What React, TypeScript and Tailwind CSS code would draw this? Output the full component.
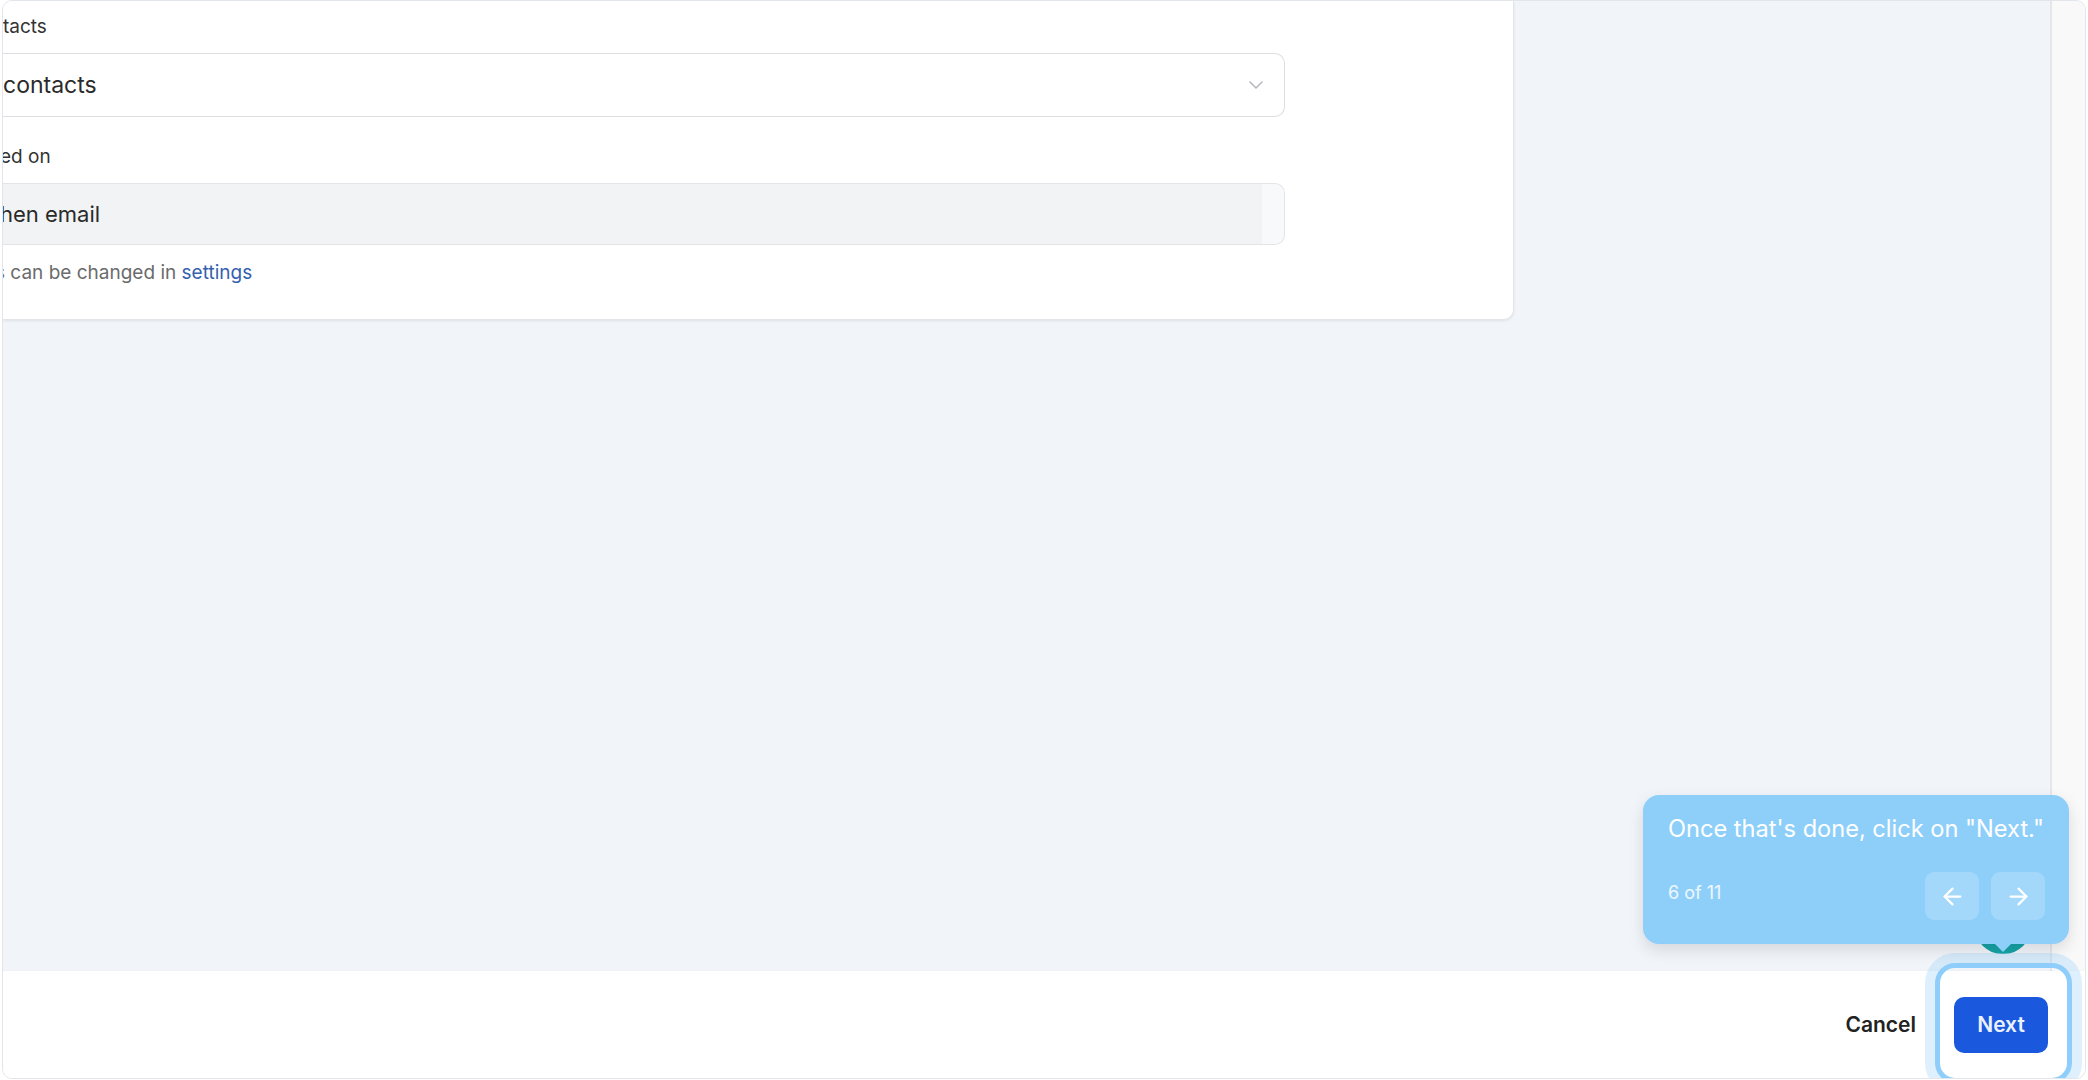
import React from "react";
import { ArrowLeft, ArrowRight, ChevronDown } from "lucide-react";

export default function App() {
  return (
    <div className="w-[2088px] h-[1080px] bg-white pl-[2px] font-['Inter',sans-serif]">
      <div className="relative w-[2084px] h-[1079px] border border-[#e2e5ea] rounded-[10px] overflow-hidden flex flex-col">
        {/* top area */}
        <div className="flex-1 flex min-h-0">
          <div className="flex-1 bg-[#f1f5f9]">
            <div className="w-[1511px] h-[319px] bg-white border-r border-b border-[#e3e5e9] rounded-br-[10px] shadow-[0_1px_3px_rgba(0,0,0,0.08)] pt-[12px]">
              <div className="h-[28px] leading-[28px] text-[19px] text-[#333]">tacts</div>
              <div className="mt-[12px] w-[1282px] h-[64px] bg-white border-y border-r border-[#dcdee2] rounded-r-[10px] flex items-center justify-between pr-[16px]">
                <span className="text-[23px] text-[#2a2a2a]">contacts</span>
                <ChevronDown className="w-[24px] h-[24px] text-[#b5b7bb]" strokeWidth={1.5} />
              </div>
              <div className="mt-[26px] h-[28px] leading-[28px] text-[19px] text-[#333] -ml-[3px]">ed on</div>
              <div className="mt-[12px] w-[1282px] h-[62px] bg-[#f2f3f5] border-y border-r border-[#e2e4e8] rounded-r-[10px] flex items-center overflow-hidden">
                <span className="flex-1 text-[22px] text-[#2a2a2a] -ml-[3px]">hen email</span>
                <div className="w-[22px] h-full bg-[#f8f9fa]" />
              </div>
              <div className="mt-[16px] h-[24px] leading-[24px] text-[19px] text-[#6b6b6b] -ml-[8px]">
                s can be changed in <span className="text-[#3461ad]">settings</span>
              </div>
            </div>
          </div>
          <div className="w-[35px] bg-[#f9f9fa] border-l-2 border-[#e4e6ea]" />
        </div>
        {/* footer */}
        <div className="h-[107px] bg-white flex items-center justify-end pr-[37px] gap-[38px] shadow-[0_-1px_2px_rgba(0,0,0,0.02)]">
          <span className="text-[21px] font-semibold text-[#222]">Cancel</span>
          <button className="relative z-20 w-[94px] h-[56px] rounded-[10px] bg-[#1a58dd] text-[21px] font-semibold text-[#eaf1ff] flex items-center justify-center">
            Next
          </button>
        </div>

        {/* beacon */}
        <div className="absolute left-[1972px] top-[899px] w-[56px] h-[54px] rounded-full bg-[#17a3a6] z-0" />
        {/* highlight ring */}
        <div className="absolute left-[1932px] top-[962px] w-[137px] h-[120px] rounded-[20px] border-[5px] border-[#8fcdfa] shadow-[0_0_0_10px_rgba(160,212,250,0.35)] z-10" />

        {/* tooltip */}
        <div className="absolute left-[1640px] top-[794px] w-[426px] h-[149px] rounded-[16px] bg-[#8ecffa] shadow-[0_6px_16px_rgba(0,0,0,0.12)] pl-[25px] pr-[24px] pt-[18px] z-30">
          <div className="text-[23.6px] leading-[32px] text-white">Once that's done, click on "Next."</div>
          <div className="mt-[27px] flex items-center justify-between">
            <span className="text-[18px] text-white/85 -mt-[8px]">6 of 11</span>
            <div className="flex gap-[12px]">
              <div className="w-[54px] h-[48px] rounded-[9px] bg-white/20 flex items-center justify-center">
                <ArrowLeft className="w-[27px] h-[27px] text-white" strokeWidth={2} />
              </div>
              <div className="w-[54px] h-[48px] rounded-[9px] bg-white/20 flex items-center justify-center">
                <ArrowRight className="w-[27px] h-[27px] text-white" strokeWidth={2} />
              </div>
            </div>
          </div>
          <div className="absolute left-[352px] -bottom-[8px] w-0 h-0 border-l-[8px] border-r-[8px] border-t-[8px] border-l-transparent border-r-transparent border-t-[#8ecffa]" />
        </div>
      </div>
    </div>
  );
}
